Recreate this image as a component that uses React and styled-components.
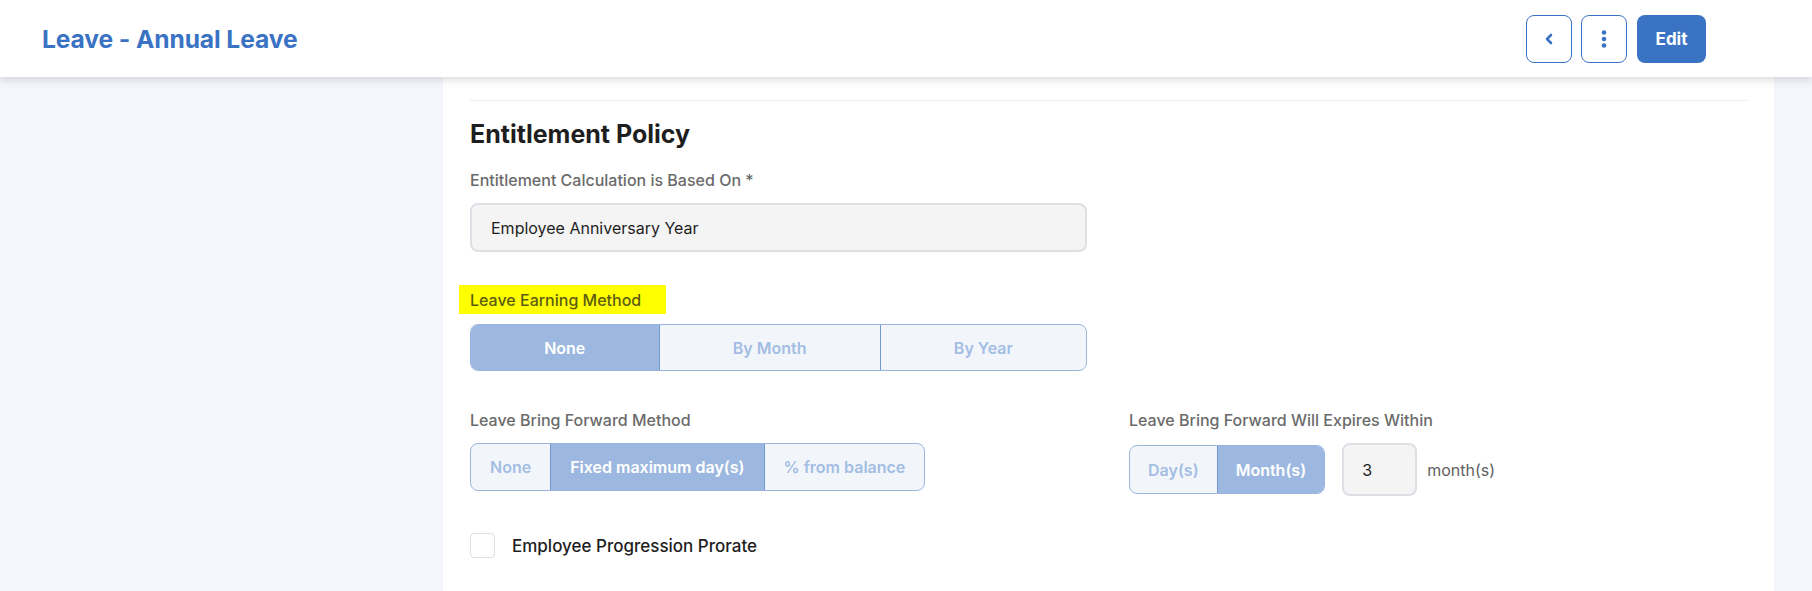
import React from 'react';
import styled, { createGlobalStyle } from 'styled-components';

const GlobalStyle = createGlobalStyle`
  * { box-sizing: border-box; }
  html, body {
    margin: 0;
    padding: 0;
    background: #f3f6fb;
    font-family: 'Inter', 'Liberation Sans', sans-serif;
  }
`;

const Page = styled('div')`
  min-height: 591px;
  display: flex;
  flex-direction: column;
`;

const Header = styled('div')`
  height: 77px;
  background: #fff;
  display: flex;
  align-items: center;
  justify-content: space-between;
  padding: 0 106px 0 42px;
  box-shadow: 0 3px 8px rgba(0, 0, 0, 0.14);
  position: relative;
  z-index: 2;
`;

const Title = styled('div')`
  font-size: 24.6px;
  font-weight: 700;
  color: #3b73c4;
  letter-spacing: -0.1px;
`;

const Actions = styled('div')`
  display: flex;
  gap: 9px;
  align-items: center;
`;

const IconButton = styled('div')`
  width: 46px;
  height: 48px;
  border: 1px solid #3b73c4;
  border-radius: 8px;
  background: #fff;
  display: flex;
  align-items: center;
  justify-content: center;
`;

const EditButton = styled('div')`
  width: 69px;
  height: 48px;
  border-radius: 8px;
  background: #3b73c4;
  color: #fff;
  font-weight: 700;
  font-size: 17px;
  display: flex;
  align-items: center;
  justify-content: center;
  margin-left: 1px;
`;

const Body = styled('div')`
  flex: 1;
  display: flex;
  padding-left: 443px;
`;

const Card = styled('div')`
  width: 1331px;
  background: #fff;
  padding: 23px 27px 0 27px;
  min-height: 514px;
`;

const Divider = styled('div')`
  height: 1px;
  background: #ececec;
`;

const SectionTitle = styled('div')`
  margin-top: 18px;
  font-size: 25px;
  font-weight: 700;
  color: #1e1e1e;
  line-height: 30px;
`;

const Grid = styled('div')`
  display: grid;
  grid-template-columns: 617px 1fr;
  column-gap: 42px;
`;

const Field = styled('div')`
  display: flex;
  flex-direction: column;
  align-items: flex-start;
  margin-top: ${(p) => p.$top || 0}px;
`;

const Label = styled('div')`
  font-size: 16px;
  font-weight: 500;
  color: #6b6b6b;
  line-height: 20px;
  margin-bottom: ${(p) => p.$gap || 14}px;
  ${(p) => p.$highlight && `
    background: #ffff00;
    color: #5c5c12;
    padding: 5px 25px 4px 11px;
    margin-left: -11px;
  `}
`;

const TextInput = styled('div')`
  width: ${(p) => p.$width || '100%'};
  height: ${(p) => p.$height || 49}px;
  background: #f4f4f4;
  border: 2px solid #dcdfe3;
  border-radius: 8px;
  display: flex;
  align-items: center;
  padding-left: ${(p) => p.$pad || 19}px;
  font-size: 16px;
  color: #1e1e1e;
`;

const Segmented = styled('div')`
  display: flex;
  width: ${(p) => p.$width || 'auto'};
  height: ${(p) => p.$height || 48}px;
  border: 1px solid #9ab6e0;
  border-radius: 8px;
  overflow: hidden;
  background: #f2f6fb;
`;

const Segment = styled('div')`
  flex: ${(p) => (p.$stretch ? '1 1 auto' : '0 0 auto')};
  padding: 0 ${(p) => p.$pad || 18}px;
  display: flex;
  align-items: center;
  justify-content: center;
  font-size: 16px;
  font-weight: 600;
  color: ${(p) => (p.$active ? '#fff' : '#a3bde3')};
  background: ${(p) => (p.$active ? '#9db8e0' : 'transparent')};
  & + & {
    border-left: 1px solid #7298d2;
  }
`;

const Row = styled('div')`
  display: flex;
  align-items: center;
  gap: 17px;
`;

const Unit = styled('div')`
  font-size: 16px;
  color: #5f5f5f;
  margin-left: -7px;
`;

const CheckRow = styled('div')`
  display: flex;
  align-items: center;
  gap: 17px;
  margin-top: 37px;
`;

const Checkbox = styled('div')`
  width: 25px;
  height: 25px;
  border: 1px solid #dddfe3;
  border-radius: 4px;
  background: #fff;
`;

const CheckLabel = styled('div')`
  font-size: 17px;
  font-weight: 500;
  color: #1e1e1e;
`;

const App = () => (
  <Page>
    <GlobalStyle />
    <Header>
      <Title>Leave - Annual Leave</Title>
      <Actions>
        <IconButton>
          <svg width="10" height="12" viewBox="0 0 10 12">
            <path d="M7 2 L3 6 L7 10" fill="none" stroke="#3b73c4" strokeWidth="2.6" strokeLinecap="round" strokeLinejoin="round" />
          </svg>
        </IconButton>
        <IconButton>
          <svg width="8" height="20" viewBox="0 0 8 20">
            <circle cx="4" cy="3.5" r="2.3" fill="#3b73c4" />
            <circle cx="4" cy="10" r="2.3" fill="#3b73c4" />
            <circle cx="4" cy="16.5" r="2.3" fill="#3b73c4" />
          </svg>
        </IconButton>
        <EditButton>Edit</EditButton>
      </Actions>
    </Header>
    <Body>
      <Card>
        <Divider />
        <SectionTitle>Entitlement Policy</SectionTitle>
        <Grid>
          <Field $top={21}>
            <Label $gap={13}>Entitlement Calculation is Based On *</Label>
            <TextInput>Employee Anniversary Year</TextInput>
          </Field>
          <div />
          <Field $top={33}>
            <Label $highlight $gap={10}>Leave Earning Method</Label>
            <Segmented $width="100%" $height={47}>
              <Segment $stretch $active>None</Segment>
              <Segment $stretch>By Month</Segment>
              <Segment $stretch>By Year</Segment>
            </Segmented>
          </Field>
          <div />
          <Field $top={39}>
            <Label $gap={13}>Leave Bring Forward Method</Label>
            <Segmented>
              <Segment $pad={19}>None</Segment>
              <Segment $pad={19} $active>Fixed maximum day(s)</Segment>
              <Segment $pad={19}>% from balance</Segment>
            </Segmented>
          </Field>
          <Field $top={39}>
            <Label $gap={13}>Leave Bring Forward Will Expires Within</Label>
            <Row>
              <Segmented $height={49}>
                <Segment>Day(s)</Segment>
                <Segment $active>Month(s)</Segment>
              </Segmented>
              <TextInput $width="75px" $height={53} $pad={18}>3</TextInput>
              <Unit>month(s)</Unit>
            </Row>
          </Field>
        </Grid>
        <CheckRow>
          <Checkbox />
          <CheckLabel>Employee Progression Prorate</CheckLabel>
        </CheckRow>
      </Card>
    </Body>
  </Page>
);

export default App;
